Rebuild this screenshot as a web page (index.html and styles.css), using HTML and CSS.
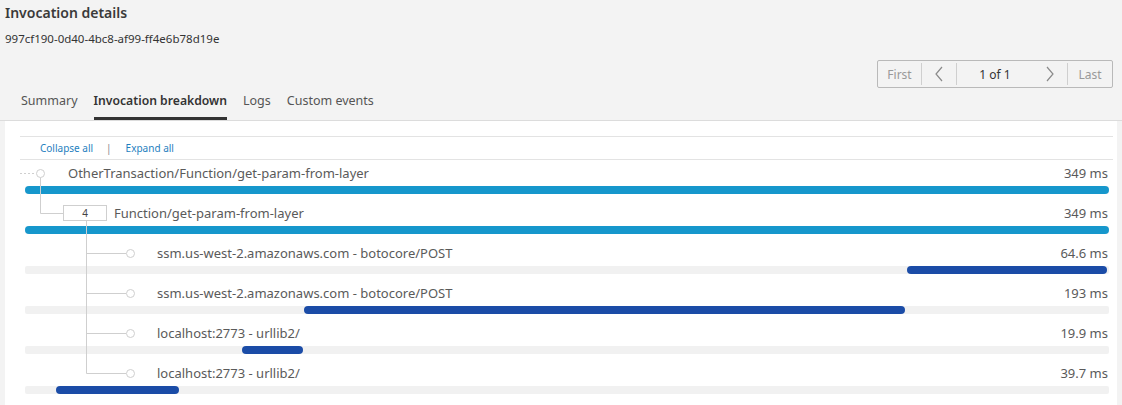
FILE: index.html
```html
<!doctype html>
<html>
	<head>
		<link rel="stylesheet" href="styles.css">
	</head>
	<body>
		<div id="header">
			<div class="title">Invocation details</div>
			<div class="guid">997cf190-0d40-4bc8-af99-ff4e6b78d19e</div>

			<div class="pager-row">
				<div class="pager">
					<button class="pg-text">First</button>
					<button class="pg-arrow">
						<svg width="10" height="16" viewBox="0 0 10 16"><path d="M8 1 L2 8 L8 15" fill="none" stroke="#8a8a8a" stroke-width="1.2"/></svg>
					</button>
					<span class="pg-count">1 of 1</span>
					<button class="pg-arrow no-div">
						<svg width="10" height="16" viewBox="0 0 10 16"><path d="M2 1 L8 8 L2 15" fill="none" stroke="#8a8a8a" stroke-width="1.2"/></svg>
					</button>
					<button class="pg-text">Last</button>
				</div>
			</div>

			<div class="tabs">
				<span class="tab">Summary</span>
				<span class="tab active">Invocation breakdown</span>
				<span class="tab">Logs</span>
				<span class="tab">Custom events</span>
			</div>
		</div>

		<div id="panel">
			<div class="toolbar">
				<a>Collapse all</a>
				<span class="sep">|</span>
				<a>Expand all</a>
			</div>

			<div class="tree">
				<svg class="links" width="120" height="230" viewBox="0 0 120 230">
					<g fill="none" stroke="#cfcfcf" stroke-width="1">
						<path d="M0 13.5 H16" stroke-dasharray="2 2"/>
						<path d="M20.5 17.5 V53.5 H43"/>
						<path d="M66.5 61 V213.5"/>
						<path d="M66.5 93.5 H106"/>
						<path d="M66.5 133.5 H106"/>
						<path d="M66.5 173.5 H106"/>
						<path d="M66.5 213.5 H106"/>
						<circle cx="20.5" cy="13.5" r="4" fill="#fff"/>
						<circle cx="110.5" cy="93.5" r="4" fill="#fff"/>
						<circle cx="110.5" cy="133.5" r="4" fill="#fff"/>
						<circle cx="110.5" cy="173.5" r="4" fill="#fff"/>
						<circle cx="110.5" cy="213.5" r="4" fill="#fff"/>
					</g>
				</svg>

				<div class="row">
					<div class="line depth-0">
						<span class="name">OtherTransaction/Function/get-param-from-layer</span>
						<span class="time">349 ms</span>
					</div>
					<div class="track"><div class="bar root" style="margin-left: 0; width: 100%"></div></div>
				</div>

				<div class="row">
					<div class="line depth-1">
						<span class="count">4</span>
						<span class="name">Function/get-param-from-layer</span>
						<span class="time">349 ms</span>
					</div>
					<div class="track"><div class="bar root" style="margin-left: 0; width: 100%"></div></div>
				</div>

				<div class="row">
					<div class="line depth-2">
						<span class="name">ssm.us-west-2.amazonaws.com - botocore/POST</span>
						<span class="time">64.6 ms</span>
					</div>
					<div class="track"><div class="bar" style="margin-left: 882px; width: 200px"></div></div>
				</div>

				<div class="row">
					<div class="line depth-2">
						<span class="name">ssm.us-west-2.amazonaws.com - botocore/POST</span>
						<span class="time">193 ms</span>
					</div>
					<div class="track"><div class="bar" style="margin-left: 279px; width: 601px"></div></div>
				</div>

				<div class="row">
					<div class="line depth-2">
						<span class="name">localhost:2773 - urllib2/</span>
						<span class="time">19.9 ms</span>
					</div>
					<div class="track"><div class="bar" style="margin-left: 217px; width: 61px"></div></div>
				</div>

				<div class="row">
					<div class="line depth-2">
						<span class="name">localhost:2773 - urllib2/</span>
						<span class="time">39.7 ms</span>
					</div>
					<div class="track"><div class="bar" style="margin-left: 31px; width: 123px"></div></div>
				</div>
			</div>
		</div>
	</body>
</html>
```

FILE: styles.css
```css
body, html {
	margin: 0;
	padding: 0;
	height: 100%;
	background: #f3f3f3;
	font-family: "Noto Sans", "Open Sans", sans-serif;
	color: #333;
	overflow: hidden;
}

#header {
	padding: 4px 0 0 0;
	border-bottom: 1px solid #dcdcdc;
}

.title {
	padding-left: 5px;
	font-size: 14px;
	font-weight: 600;
	line-height: 17px;
	color: #3a3a3a;
}

.guid {
	padding-left: 5px;
	margin-top: 11px;
	font-size: 11.5px;
	line-height: 14px;
	color: #333;
}

.pager-row {
	display: flex;
	justify-content: flex-end;
	margin-top: 14px;
	padding-right: 9px;
}

.pager {
	display: flex;
	align-items: center;
	height: 26px;
	border: 1px solid #b9b9b9;
	border-radius: 2px;
}

.pager button {
	height: 22px;
	background: none;
	border: none;
	border-right: 1px solid #cfcfcf;
	font-family: inherit;
	font-size: 12px;
	color: #999;
	padding: 0;
	display: flex;
	align-items: center;
	justify-content: center;
}

.pager button:last-child {
	border-right: none;
}

.pg-text {
	width: 44px;
}

.pg-arrow {
	width: 35px;
}

.pg-count {
	width: 76px;
	text-align: center;
	font-size: 12px;
	color: #333;
}

.tabs {
	display: flex;
	margin-top: 3px;
	padding-left: 21px;
	gap: 16px;
}

.tab {
	font-size: 12.5px;
	line-height: 20px;
	padding-bottom: 6px;
	color: #555;
	border-bottom: 3px solid transparent;
}

.tab.active {
	font-size: 12.2px;
	font-weight: 600;
	color: #333;
	border-bottom-color: #333;
}

#panel {
	background: #fff;
	margin: 0 5px;
	padding: 15px 4px 5px 15px;
}

.toolbar {
	border-top: 1px solid #e3e3e3;
	border-bottom: 1px solid #e3e3e3;
	height: 22px;
	display: flex;
	align-items: center;
	padding-left: 20px;
	font-size: 10px;
}

.toolbar a {
	color: #1f7fc0;
}

.toolbar .sep {
	color: #888;
	margin: 0 14px 0 13px;
	font-size: 10px;
}

.tree {
	position: relative;
}

.links {
	position: absolute;
	left: 0;
	top: 0;
}

.row {
	height: 40px;
}

.line {
	height: 26px;
	display: flex;
	align-items: center;
	font-size: 13px;
	color: #5a5a5a;
	padding-right: 5px;
}

.depth-0 {
	padding-left: 48px;
}

.depth-1 {
	padding-left: 43px;
}

.depth-2 {
	padding-left: 137px;
}

.name {
	flex: 1;
}

.count {
	position: relative;
	width: 42px;
	height: 14px;
	border: 1px solid #cfcfcf;
	background: #fff;
	font-size: 10px;
	line-height: 14px;
	text-align: center;
	margin-right: 7px;
	color: #444;
}

.track {
	margin: 0 4px 0 5px;
	height: 8px;
	border-radius: 2px;
	background: #f1f1f1;
	display: flex;
}

.bar {
	height: 8px;
	border-radius: 4px;
	background: #1b4ca7;
}

.bar.root {
	background: #1697cc;
}
```
